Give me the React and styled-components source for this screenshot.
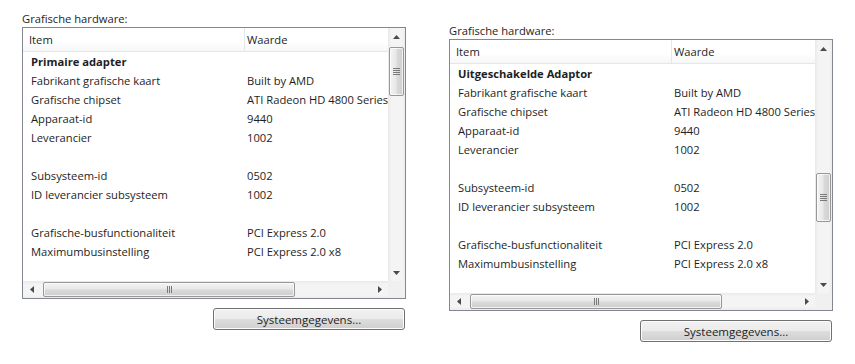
import React from 'react';
import styled, { createGlobalStyle } from 'styled-components';

const GlobalStyle = createGlobalStyle`
	body {
		margin: 0;
		background: #ffffff;
		font-family: "Open Sans", "Noto Sans", "Liberation Sans", sans-serif;
		font-size: 11.2px;
		color: #1e1e1e;
	}
`

const Page = styled.div`
	display: flex;
	align-items: flex-start;
	gap: 43px;
	padding: 11px 0 0 22px;
`
const Panel = styled.div`
	width: 384px;
	margin-top: ${props => props.$drop || 0}px;
	display: flex;
	flex-direction: column;
`
const Label = styled.div`
	height: 16px;
	line-height: 16px;
`
const ListBox = styled.div`
	height: 270px;
	border: 1px solid #828790;
	display: grid;
	grid-template-columns: 1fr 17px;
	grid-template-rows: 1fr 17px;
	background: #fff;
`
const Content = styled.div`
	overflow: hidden;
	display: flex;
	flex-direction: column;
`
const Header = styled.div`
	height: 24px;
	flex: none;
	display: grid;
	grid-template-columns: 222px 1fr;
	background: linear-gradient(#ffffff 0%, #ffffff 55%, #f6f7f8 100%);
	border-bottom: 1px solid #e3e6ea;
	box-sizing: border-box;
`
const HeadCell = styled.div`
	padding-left: ${props => props.$pad}px;
	line-height: 23px;
	white-space: nowrap;
	border-right: 1px solid ${props => props.$sep ? '#e3e8ee' : 'transparent'};
`
const Row = styled.div`
	height: 19px;
	flex: none;
	display: grid;
	grid-template-columns: 223px 1fr;
	line-height: 20px;
	white-space: nowrap;
	font-weight: ${props => props.$bold ? 700 : 400};
`
const Cell = styled.div`
	padding-left: ${props => props.$pad}px;
	overflow: hidden;
`
const VScroll = styled.div`
	display: flex;
	flex-direction: column;
	background: linear-gradient(90deg, #e9e9e9 0%, #f4f4f4 20%, #f4f4f4 80%, #ececec 100%);
`
const HScroll = styled.div`
	display: flex;
	align-items: stretch;
	background: linear-gradient(#e9e9e9 0%, #f4f4f4 20%, #f4f4f4 80%, #ececec 100%);
`
const Corner = styled.div`
	background: #f0f0f0;
`
const ArrowBox = styled.div`
	width: 17px;
	height: 17px;
	flex: none;
	display: flex;
	align-items: center;
	justify-content: center;
`
const Track = styled.div`
	flex: 1;
	display: flex;
	flex-direction: ${props => props.$vertical ? 'column' : 'row'};
	align-items: stretch;
	padding: ${props => props.$vertical ? '2px 1px' : '1px 2px'};
	overflow: hidden;
`
const Thumb = styled.div`
	flex: none;
	box-sizing: border-box;
	border: 1px solid #979797;
	border-radius: 2px;
	display: flex;
	align-items: center;
	justify-content: center;
	box-shadow: inset 0 0 0 1px rgba(255,255,255,0.7);
	background: ${props => props.$vertical
		? 'linear-gradient(90deg, #f3f3f3 0%, #e8e8e8 45%, #d9d9d9 55%, #cfcfcf 100%)'
		: 'linear-gradient(#f3f3f3 0%, #e8e8e8 45%, #d9d9d9 55%, #cfcfcf 100%)'};
`
const ButtonRow = styled.div`
	display: flex;
	justify-content: flex-end;
	padding: 9px 1px 0 0;
`
const Button = styled.button`
	width: 192px;
	height: 22px;
	border: 1px solid #707070;
	border-radius: 3px;
	box-shadow: inset 0 0 0 1px #fcfcfc;
	background: linear-gradient(#f2f2f2 0%, #ebebeb 48%, #dddddd 52%, #cfcfcf 100%);
	font-family: inherit;
	font-size: 11.5px;
	color: #1e1e1e;
	padding: 0;
`

const Arrow = ({ dir }) => {
	const pts = {
		up: '0,4 3.5,0 7,4',
		down: '0,0 3.5,4 7,0',
		left: '4,0 0,3.5 4,7',
		right: '0,0 4,3.5 0,7',
	}[dir];
	const vert = dir === 'up' || dir === 'down';
	return (
		<svg width={vert ? 7 : 4} height={vert ? 4 : 7} viewBox={vert ? '0 0 7 4' : '0 0 4 7'}>
			<polygon points={pts} fill="#4a4a4a" />
		</svg>
	);
};

const Grip = ({ vertical }) => (
	<svg width="7" height="7" viewBox="0 0 7 7">
		{[0, 2, 4, 6].slice(0, vertical ? 4 : 3).map(i => vertical
			? <line key={i} x1="0" x2="7" y1={i + 0.5} y2={i + 0.5} stroke="#7a7a7a" strokeWidth="1" />
			: <line key={i} y1="0" y2="7" x1={i + 1.5} x2={i + 1.5} stroke="#7a7a7a" strokeWidth="1" />
		)}
	</svg>
);

const rows = [
	['Fabrikant grafische kaart', 'Built by AMD'],
	['Grafische chipset', 'ATI Radeon HD 4800 Series'],
	['Apparaat-id', '9440'],
	['Leverancier', '1002'],
	['', ''],
	['Subsysteem-id', '0502'],
	['ID leverancier subsysteem', '1002'],
	['', ''],
	['Grafische-busfunctionaliteit', 'PCI Express 2.0'],
	['Maximumbusinstelling', 'PCI Express 2.0 x8'],
	['', ''],
];

const HardwareList = ({ title, thumbTop, drop }) => (
	<Panel $drop={drop}>
		<Label>Grafische hardware:</Label>
		<ListBox>
			<Content>
				<Header>
					<HeadCell $pad={6} $sep>Item</HeadCell>
					<HeadCell $pad={2}>Waarde</HeadCell>
				</Header>
				<Row $bold><Cell $pad={8}>{title}</Cell><Cell $pad={1}></Cell></Row>
				{rows.map(([k, v], i) => (
					<Row key={i}><Cell $pad={8}>{k}</Cell><Cell $pad={1}>{v}</Cell></Row>
				))}
			</Content>
			<VScroll>
				<ArrowBox><Arrow dir="up" /></ArrowBox>
				<Track $vertical>
					<Thumb $vertical style={{ marginTop: thumbTop, height: 49 }}>
						<Grip vertical />
					</Thumb>
				</Track>
				<ArrowBox><Arrow dir="down" /></ArrowBox>
			</VScroll>
			<HScroll>
				<ArrowBox><Arrow dir="left" /></ArrowBox>
				<Track>
					<Thumb style={{ width: 252, marginLeft: 1 }}>
						<Grip />
					</Thumb>
				</Track>
				<ArrowBox><Arrow dir="right" /></ArrowBox>
			</HScroll>
			<Corner />
		</ListBox>
		<ButtonRow>
			<Button>Systeemgegevens...</Button>
		</ButtonRow>
	</Panel>
);

export default function App() {
	return (
		<>
			<GlobalStyle />
			<Page>
				<HardwareList title="Primaire adapter" thumbTop={0} drop={0} />
				<HardwareList title="Uitgeschakelde Adaptor" thumbTop={114} drop={12} />
			</Page>
		</>
	);
}
